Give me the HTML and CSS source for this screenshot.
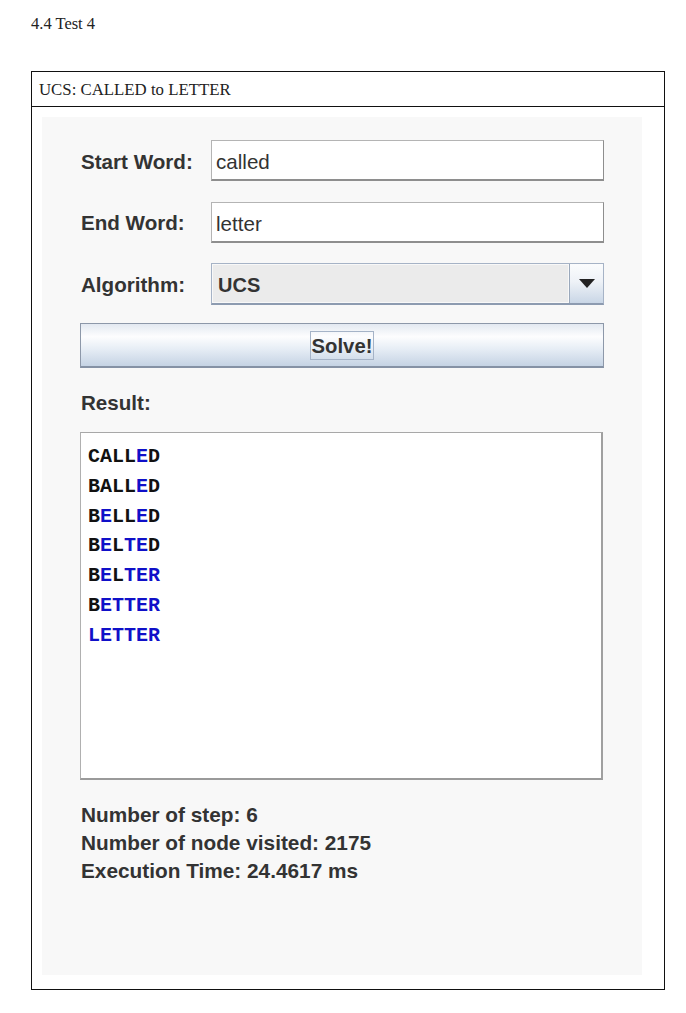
FILE: index.html
```html
<!DOCTYPE html>
<html>
<head>
<meta charset="utf-8">
<link rel="stylesheet" href="styles.css">
</head>
<body>
<div class="page">
  <div class="doc-title">4.4 Test 4</div>
  <div class="frame">
    <div class="caption">UCS: CALLED to LETTER</div>
    <div class="panel">
      <div class="form">
        <div class="label">Start Word:</div>
        <div class="field">called</div>
        <div class="label">End Word:</div>
        <div class="field">letter</div>
        <div class="label">Algorithm:</div>
        <div class="combo">
          <div class="combo-value">UCS</div>
          <div class="combo-arrow"><span class="tri"></span></div>
        </div>
      </div>
      <div class="solve"><span class="solve-text">Solve!</span></div>
      <div class="label result-label">Result:</div>
      <div class="result">
        <div class="line">CALL<b>E</b>D</div>
        <div class="line">BALL<b>E</b>D</div>
        <div class="line">B<b>E</b>LL<b>E</b>D</div>
        <div class="line">B<b>E</b>L<b>TE</b>D</div>
        <div class="line">B<b>E</b>L<b>TER</b></div>
        <div class="line">B<b>ETTER</b></div>
        <div class="line"><b>LETTER</b></div>
      </div>
      <div class="stats">
        <div>Number of step: 6</div>
        <div>Number of node visited: 2175</div>
        <div>Execution Time: 24.4617 ms</div>
      </div>
    </div>
  </div>
</div>
</body>
</html>
```

FILE: styles.css
```css
html, body {
  margin: 0;
  padding: 0;
  background: #ffffff;
}

.page {
  padding: 14px 0 0 31px;
  width: 636px;
}

.doc-title {
  font-family: "Liberation Serif", serif;
  font-size: 16.5px;
  line-height: 20px;
  color: #222;
  height: 20px;
}

.frame {
  margin-top: 37px;
  width: 632px;
  height: 917px;
  border: 1px solid #111;
  display: flex;
  flex-direction: column;
}

.caption {
  height: 34px;
  border-bottom: 1px solid #111;
  font-family: "Liberation Serif", serif;
  font-size: 16.8px;
  line-height: 35px;
  padding-left: 7px;
  color: #222;
  flex: none;
}

.panel {
  margin: 10px 22px 14px 10px;
  flex: 1;
  background: #f8f8f8;
  padding: 23px 38px 0 38px;
  font-family: "Liberation Sans", Arial, sans-serif;
  color: #333;
}

.form {
  display: grid;
  grid-template-columns: 131px 393px;
  grid-template-rows: 41px 42px 42px;
  row-gap: 20px;
  align-items: center;
}

.label {
  font-weight: bold;
  font-size: 20.6px;
  padding-left: 1px;
  padding-top: 2px;
}

.field {
  box-sizing: border-box;
  height: 41px;
  background: #fff;
  border-top: 1px solid #b4b4b4;
  border-left: 1px solid #b4b4b4;
  border-right: 1px solid #8e8e8e;
  border-bottom: 2px solid #8e8e8e;
  font-size: 20.6px;
  line-height: 38px;
  padding: 2px 0 0 4px;
  color: #333;
}

.combo {
  height: 42px;
  box-sizing: border-box;
  border: 1px solid #a6b3c6;
  border-bottom: 2px solid #8d9bb0;
  background: #ebebeb;
  display: flex;
}

.combo-value {
  flex: 1;
  font-weight: bold;
  font-size: 20px;
  line-height: 39px;
  padding: 1px 0 0 5px;
  border: 1px solid #f8f8f8;
}

.combo-arrow {
  width: 33px;
  border-left: 1px solid #9aa8bb;
  background: linear-gradient(#fbfcfd 0%, #eef2f7 45%, #c9d6e6 100%);
  display: flex;
  align-items: center;
  justify-content: center;
}

.tri {
  width: 0;
  height: 0;
  border-left: 8px solid transparent;
  border-right: 8px solid transparent;
  border-top: 9px solid #222;
}

.solve {
  margin-top: 18px;
  height: 45px;
  width: 524px;
  box-sizing: border-box;
  border: 1px solid #8d98a9;
  border-bottom: 2px solid #8592a5;
  background: linear-gradient(#e3e9f1 0%, #fdfdfe 30%, #e6edf5 60%, #c5d3e4 100%);
  display: flex;
  align-items: center;
  justify-content: center;
}

.solve-text {
  font-weight: bold;
  font-size: 20.3px;
  line-height: 26px;
  padding: 1px 1px 0 1px;
  border: 1px solid #a5b3c7;
  color: #333;
}

.result-label {
  margin-top: 23px;
  line-height: 24px;
  height: 24px;
  padding-top: 0;
}

.result {
  margin-top: 17px;
  width: 523px;
  height: 348px;
  box-sizing: border-box;
  background: #fff;
  border-top: 1px solid #a8a8a8;
  border-left: 1px solid #b0b0b0;
  border-right: 2px solid #a0a0a0;
  border-bottom: 2px solid #9a9a9a;
  padding: 9px 7px;
}

.line {
  font-family: "Courier New", "Liberation Mono", monospace;
  font-weight: bold;
  font-size: 20px;
  line-height: 29.8px;
  color: #111;
}

.line b {
  color: #1010c8;
}

.stats {
  margin-top: 21px;
  font-weight: bold;
  font-size: 20.8px;
  line-height: 28px;
  padding-left: 1px;
}
```
